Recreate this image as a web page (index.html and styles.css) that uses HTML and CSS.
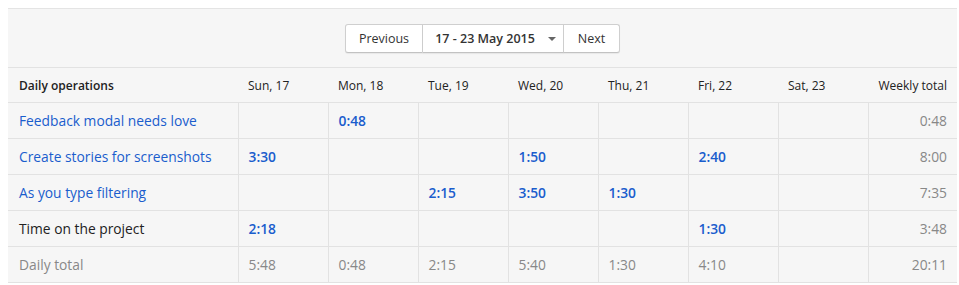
FILE: index.html
```html
<!DOCTYPE html>
<html>
<head>
<meta charset="utf-8">
<link rel="stylesheet" href="styles.css">
</head>
<body>
<div class="report">
  <div class="toolbar">
    <div class="pager">
      <button class="btn">Previous</button>
      <button class="btn btn-date">17 - 23 May 2015 <span class="caret"></span></button>
      <button class="btn">Next</button>
    </div>
  </div>
  <table class="grid">
    <colgroup>
      <col class="c-name"><col class="c-day"><col class="c-day"><col class="c-day"><col class="c-day"><col class="c-day"><col class="c-day"><col class="c-day"><col class="c-total">
    </colgroup>
    <thead>
      <tr>
        <th class="name-h">Daily operations</th>
        <th>Sun, 17</th><th>Mon, 18</th><th>Tue, 19</th><th>Wed, 20</th><th>Thu, 21</th><th>Fri, 22</th><th>Sat, 23</th>
        <th class="total">Weekly total</th>
      </tr>
    </thead>
    <tbody>
      <tr>
        <td class="name link">Feedback modal needs love</td>
        <td></td><td class="val">0:48</td><td></td><td></td><td></td><td></td><td></td>
        <td class="total">0:48</td>
      </tr>
      <tr>
        <td class="name link">Create stories for screenshots</td>
        <td class="val">3:30</td><td></td><td></td><td class="val">1:50</td><td></td><td class="val">2:40</td><td></td>
        <td class="total">8:00</td>
      </tr>
      <tr>
        <td class="name link">As you type filtering</td>
        <td></td><td></td><td class="val">2:15</td><td class="val">3:50</td><td class="val">1:30</td><td></td><td></td>
        <td class="total">7:35</td>
      </tr>
      <tr>
        <td class="name">Time on the project</td>
        <td class="val">2:18</td><td></td><td></td><td></td><td></td><td class="val">1:30</td><td></td>
        <td class="total">3:48</td>
      </tr>
      <tr class="sum">
        <td class="name">Daily total</td>
        <td>5:48</td><td>0:48</td><td>2:15</td><td>5:40</td><td>1:30</td><td>4:10</td><td></td>
        <td class="total">20:11</td>
      </tr>
    </tbody>
  </table>
</div>
</body>
</html>
```
FILE: styles.css
```css
html, body {
  margin: 0;
  padding: 0;
  background: #ffffff;
}
body {
  padding: 8px 2px 0 8px;
  font-family: "Open Sans", "Noto Sans", sans-serif;
  color: #222;
}
.report {
  width: 949px;
  background: #f6f6f6;
  border-top: 1px solid #e4e4e4;
}
.toolbar {
  display: flex;
  justify-content: center;
  padding: 15px 0 14px;
  border-bottom: 1px solid #e2e2e2;
}
.pager {
  display: flex;
}
.btn {
  font-family: inherit;
  font-size: 12.5px;
  color: #333;
  background: #fff;
  border: 1px solid #cfcfcf;
  border-bottom-color: #c2c2c2;
  height: 29px;
  padding: 0;
  margin: 0;
  box-shadow: 0 1px 1px rgba(0,0,0,0.06);
}
.btn:first-child {
  border-radius: 3px 0 0 3px;
  width: 78px;
}
.btn:last-child {
  border-radius: 0 3px 3px 0;
  border-left: none;
  width: 56px;
}
.btn-date {
  border-left: none;
  font-weight: 600;
  width: 141px;
  padding: 0 0 0 5px;
  display: flex;
  align-items: center;
  justify-content: center;
  gap: 13px;
}
.caret {
  width: 0;
  height: 0;
  border-left: 4px solid transparent;
  border-right: 4px solid transparent;
  border-top: 4px solid #666;
  margin-top: 1px;
}
.grid {
  width: 949px;
  border-collapse: collapse;
  table-layout: fixed;
}
.c-name { width: 230px; }
.c-day { width: 90px; }
.c-total { width: 89px; }
.grid th {
  height: 34px;
  padding: 0 10px;
  font-size: 12px;
  font-weight: 400;
  color: #222;
  text-align: left;
  border-bottom: 1px solid #e2e2e2;
}
.grid th.name-h {
  font-weight: 600;
  padding-left: 11px;
}
.grid th.total, .grid td.total {
  text-align: right;
}
.grid td {
  height: 35px;
  padding: 0 10px;
  font-size: 13.8px;
  border-bottom: 1px solid #e2e2e2;
  border-left: 1px solid #e2e2e2;
  color: #888;
}
.grid td.name {
  border-left: none;
  padding-left: 11px;
  color: #222;
}
.grid td.link {
  color: #1a5dcd;
}
.grid td.val {
  color: #1a5dcd;
  font-weight: 600;
}
.grid tr.sum td {
  color: #888;
}
```
